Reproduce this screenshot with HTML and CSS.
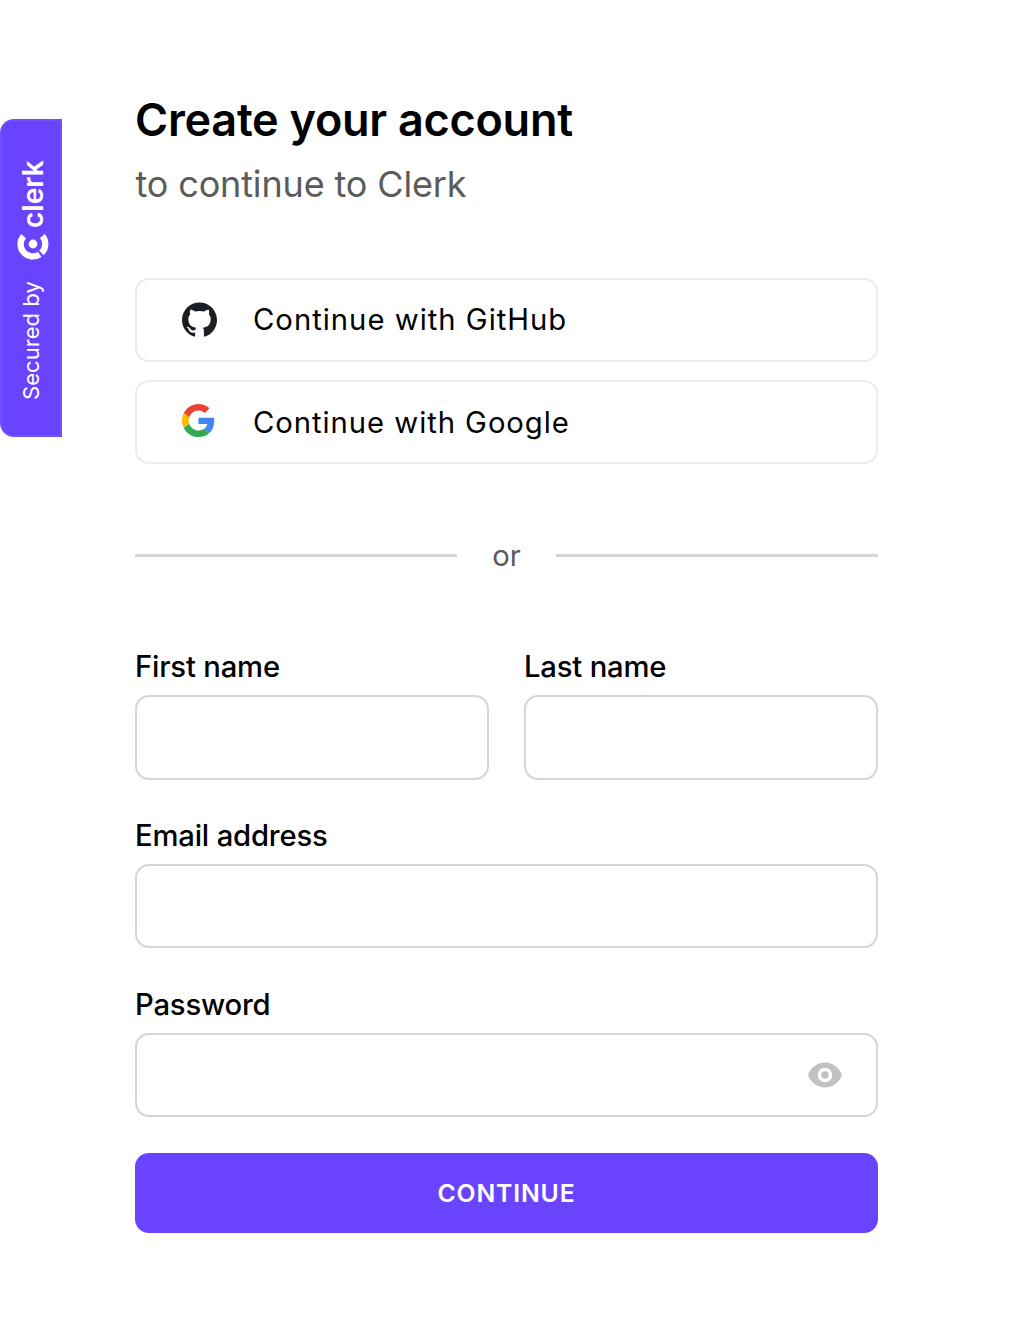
FILE: index.html
```html
<!DOCTYPE html>
<html lang="en">
<head>
<meta charset="utf-8">
<title>Create your account</title>
<link rel="stylesheet" href="styles.css">
</head>
<body>
<div class="page">
  <aside class="badge">
    <div class="badge-content">
      <span class="badge-label">Secured by</span>
      <svg class="badge-mark" width="32" height="32" viewBox="0 0 32 32" fill="none">
        <circle cx="16" cy="16" r="4.4" fill="#fff"/>
        <path d="M25.400 8.100A12.250 12.250 0 0 1 24.400 24.900M22.700 26.300A12.250 12.250 0 0 1 6.600 8.100" stroke="#fff" stroke-width="6.300"/>
      </svg>
      <span class="badge-name">clerk</span>
    </div>
  </aside>
  <main class="card">
    <h1 class="title">Create your account</h1>
    <p class="subtitle">to continue to Clerk</p>
    <div class="providers">
      <button class="provider" type="button">
        <svg class="provider-icon" width="35" height="36" viewBox="0 0 16 16"><path fill="#191f24" d="M8 0C3.58 0 0 3.58 0 8c0 3.54 2.29 6.53 5.47 7.59.4.07.55-.17.55-.38 0-.19-.01-.82-.01-1.49-2.01.37-2.53-.49-2.69-.94-.09-.23-.48-.94-.82-1.13-.28-.15-.68-.52-.01-.53.63-.01 1.08.58 1.23.82.72 1.21 1.87.87 2.33.66.07-.52.28-.87.51-1.07-1.78-.2-3.64-.89-3.64-3.95 0-.87.31-1.59.82-2.15-.08-.2-.36-1.02.08-2.12 0 0 .67-.21 2.2.82.64-.18 1.32-.27 2-.27s1.36.09 2 .27c1.53-1.04 2.2-.82 2.2-.82.44 1.1.16 1.92.08 2.12.51.56.82 1.27.82 2.15 0 3.07-1.87 3.75-3.65 3.95.29.25.54.73.54 1.48 0 1.07-.01 1.93-.01 2.2 0 .21.15.46.55.38A8.01 8.01 0 0 0 16 8c0-4.42-3.58-8-8-8z"/></svg>
        <span>Continue with GitHub</span>
      </button>
      <button class="provider provider-google" type="button">
        <svg class="provider-icon" width="35" height="33" viewBox="0 0 51 48"><path fill="#EA4335" d="M24 9.5c3.54 0 6.71 1.22 9.21 3.6l6.85-6.85C35.9 2.38 30.47 0 24 0 14.62 0 6.51 5.38 2.56 13.22l7.98 6.19C12.43 13.72 17.74 9.5 24 9.5z"/><path fill="#4285F4" d="M46.98 24.55c0-1.57-.15-3.09-.38-4.55H24v9.02h12.94c-.58 2.96-2.26 5.48-4.78 7.18l7.73 6c4.51-4.18 7.09-10.36 7.09-17.65z"/><path fill="#FBBC05" d="M10.53 28.59A14.5 14.5 0 0 1 9.77 24c0-1.6.27-3.14.76-4.59l-7.98-6.19A23.9 23.9 0 0 0 0 24c0 3.88.92 7.54 2.56 10.78l7.97-6.19z"/><path fill="#34A853" d="M24 48c6.48 0 11.93-2.13 15.89-5.81l-7.73-6c-2.15 1.45-4.92 2.3-8.16 2.3-6.26 0-11.57-4.22-13.47-9.91l-7.98 6.19C6.51 42.62 14.62 48 24 48z"/></svg>
        <span>Continue with Google</span>
      </button>
    </div>
    <div class="divider"><span>or</span></div>
    <form class="form">
      <div class="row">
        <label class="field">First name<input class="input" type="text"></label>
        <label class="field">Last name<input class="input" type="text"></label>
      </div>
      <label class="field">Email address<input class="input" type="text"></label>
      <label class="field">Password
        <span class="input password">
          <input class="bare-input" type="password">
          <svg width="34" height="26" viewBox="0 0 34 26"><path fill="#c1c1c1" fill-rule="evenodd" d="M0 13C2.7 5.5 9.2.6 17 .6S31.300 5.500 34 13C31.300 20.500 24.800 25.400 17 25.400S2.700 20.500 0 13ZM17 5.700a7.300 7.300 0 1 0 0 14.600a7.300 7.300 0 0 0 0-14.600ZM17 9.300a3.700 3.700 0 1 1 0 7.400a3.700 3.700 0 0 1 0-7.400Z"/></svg>
        </span>
      </label>
      <button class="submit" type="button">CONTINUE</button>
    </form>
  </main>
</div>
</body>
</html>
```
FILE: styles.css
```css
* { box-sizing: border-box; }
body {
  margin: 0;
  background: #fff;
  color: #000;
  font-family: Inter, "Liberation Sans", sans-serif;
}
.page {
  display: grid;
  grid-template-columns: 62px 743px;
  column-gap: 73px;
  align-items: start;
  height: 1341px;
  overflow: hidden;
}
.badge {
  height: 318px;
  margin-top: 119px;
  padding: 37px 0 35px 2px;
  border: 2px solid #7350ff;
  border-radius: 14px 0 0 14px;
  background: #6a43ff;
  color: #fff;
}
.badge-content {
  display: flex;
  align-items: center;
  writing-mode: vertical-rl;
  transform: rotate(180deg);
  width: 58px;
  height: 242px;
}
.badge-label { margin-left: 5px; font-size: 22.1px; line-height: 28px; white-space: nowrap; }
.badge-mark { flex: none; margin-top: 21px; transform: rotate(180deg); }
.badge-name {
  font-size: 28px;
  font-weight: 600;
  line-height: 32px;
}
.card { padding-top: 93px; }
.title {
  margin: 0;
  font-size: 45px;
  font-weight: 600;
  line-height: 54px;
  letter-spacing: -0.26px;
}
.subtitle {
  margin: 15px 0 0;
  padding-left: 0.5px;
  color: #5b5b5b;
  font-size: 36px;
  line-height: 44px;
  letter-spacing: -0.14px;
}
.providers {
  display: grid;
  gap: 18px;
  margin-top: 72px;
}
.provider {
  display: flex;
  align-items: center;
  gap: 36px;
  height: 84px;
  padding: 0 45px;
  border: 2px solid #ebebeb;
  border-radius: 14px;
  background: #fff;
  color: #000;
  font: 400 29.25px/36px Inter, sans-serif;
  letter-spacing: 1px;
}
.provider-google { padding-top: 2px; letter-spacing: 0.95px; }
.provider-google .provider-icon { margin-bottom: 6px; }
.divider {
  display: flex;
  align-items: center;
  gap: 35px;
  height: 36px;
  margin-top: 73px;
  color: #5b5b5b;
  font-size: 29.25px;
}
.divider::before, .divider::after {
  content: "";
  flex: 1;
  height: 3px;
  margin-top: 1px;
  background: #d5d5d5;
}
.form {
  display: grid;
  margin-top: 73.2px;
}
.row {
  display: grid;
  grid-template-columns: 1fr 1fr;
  gap: 35px;
}
.field {
  display: grid;
  gap: 8px;
  margin-bottom: 35.35px;
  font-size: 29.25px;
  font-weight: 500;
  line-height: 41px;
  letter-spacing: -0.19px;
}
.input {
  width: 100%;
  height: 84.4px;
  border: 2px solid #d5d5d5;
  border-radius: 14px;
  background: #fff;
}
.password {
  display: flex;
  align-items: center;
  padding-right: 34px;
}
.bare-input {
  flex: 1;
  border: 0;
  background: transparent;
}
.submit {
  height: 80px;
  margin-top: 0.5px;
  border: 0;
  border-radius: 14px;
  background: #6a43ff;
  color: #fff;
  font: 600 24.75px/30px Inter, sans-serif;
  letter-spacing: 0.85px;
}
```
